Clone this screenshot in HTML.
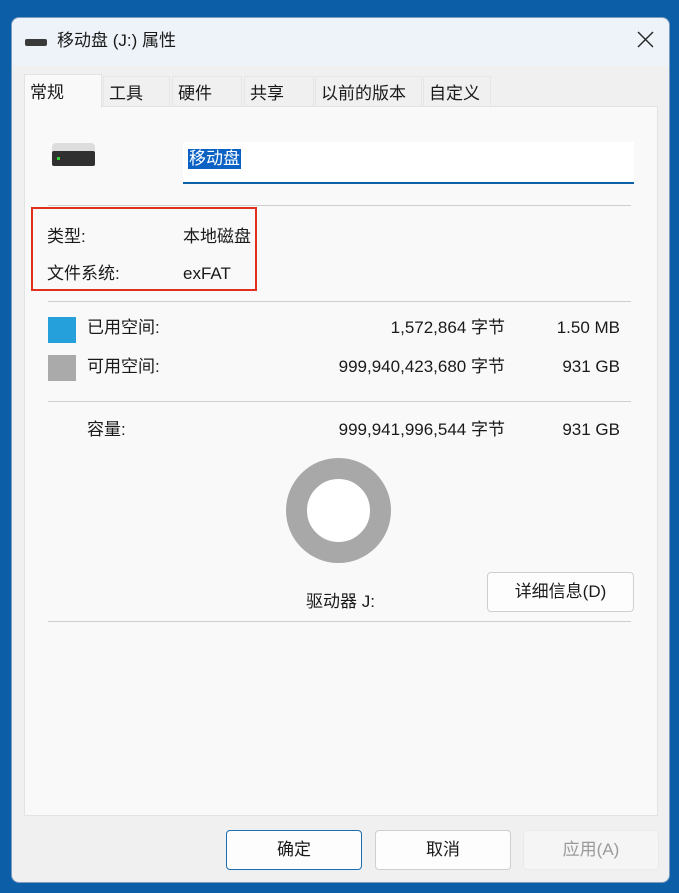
<!DOCTYPE html>
<html><head><meta charset="utf-8"><style>
*{margin:0;padding:0;box-sizing:border-box}
body{width:679px;height:893px;background:#0c5ea6;font-family:"Liberation Sans","Noto Sans CJK SC",sans-serif;color:#1a1a1a;position:relative;overflow:hidden}
.win{position:absolute;left:11px;top:17px;width:659px;height:866px;background:#f0f0f0;border-radius:8px;border:1px solid #7a9cc0}
.title{position:absolute;left:0;top:0;width:100%;height:48px;background:#eef3f9;border-radius:8px 8px 0 0}
.t{position:absolute;font-size:17px;white-space:nowrap;line-height:20px}
.r1{right:174px}.r2{right:59px}
.panel{position:absolute;left:12px;top:88px;width:634px;height:710px;background:#f9f9f9;border:1px solid #e3e3e3}
.tab{position:absolute;top:58px;height:30px;background:#f0f0f0;border:1px solid #e6e6e6;border-bottom:none;font-size:17px;line-height:20px;padding:7px 0 0 5px}
.hr{position:absolute;left:48px;width:583px;height:1px;background:#cfcfcf}
.btn{position:absolute;top:830px;height:40px;width:136px;border:1px solid #cfcfcf;border-radius:4px;background:#fdfdfd;font-size:17px;text-align:center;line-height:38px}
</style></head><body>
<div class="win">
<div class="title"></div>
<div style="position:absolute;left:13px;top:21px;width:22px;height:7px;background:#3a3a3a;border-radius:2px"></div>
<div class="t" style="left:45px;top:13px">移动盘 (J:) 属性</div>
<svg style="position:absolute;left:625px;top:13px" width="17" height="17"><path d="M1 1L16 16M16 1L1 16" stroke="#222" stroke-width="1.4"/></svg>
<div class="panel"></div>
<div class="tab" style="left:12px;top:56px;width:78px;height:34px;background:#f9f9f9;z-index:2;padding-top:8px;border-color:#e3e3e3">常规</div>
<div class="tab" style="left:91px;width:67px">工具</div>
<div class="tab" style="left:160px;width:70px">硬件</div>
<div class="tab" style="left:232px;width:70px">共享</div>
<div class="tab" style="left:303px;width:107px">以前的版本</div>
<div class="tab" style="left:411px;width:68px">自定义</div>
</div>
<div style="position:absolute;left:52px;top:143px;width:43px;height:9px;background:#ddd;border-radius:4px 4px 0 0"></div>
<div style="position:absolute;left:52px;top:151px;width:43px;height:15px;background:#303030;border-radius:2px"></div>
<div style="position:absolute;left:57px;top:157px;width:3px;height:3px;background:#3c3"></div>
<div style="position:absolute;left:183px;top:142px;width:451px;height:42px;background:#fff;border-bottom:2px solid #1060a8"></div>
<div class="t" style="left:188px;top:149px;background:#0b62c4;color:#fff;padding:0 1px">移动盘</div>
<div class="hr" style="top:205px"></div>
<div style="position:absolute;left:31px;top:207px;width:226px;height:84px;border:2px solid #e0301e"></div>
<div class="t" style="left:47px;top:227px">类型:</div>
<div class="t" style="left:183px;top:227px">本地磁盘</div>
<div class="t" style="left:47px;top:264px">文件系统:</div>
<div class="t" style="left:183px;top:264px">exFAT</div>
<div class="hr" style="top:301px"></div>
<div style="position:absolute;left:48px;top:317px;width:28px;height:26px;background:#26a0da"></div>
<div class="t" style="left:87px;top:318px">已用空间:</div>
<div class="t r1" style="top:318px">1,572,864 字节</div>
<div class="t r2" style="top:318px">1.50 MB</div>
<div style="position:absolute;left:48px;top:355px;width:28px;height:26px;background:#aaa"></div>
<div class="t" style="left:87px;top:357px">可用空间:</div>
<div class="t r1" style="top:357px">999,940,423,680 字节</div>
<div class="t r2" style="top:357px">931 GB</div>
<div class="hr" style="top:401px"></div>
<div class="t" style="left:87px;top:420px">容量:</div>
<div class="t r1" style="top:420px">999,941,996,544 字节</div>
<div class="t r2" style="top:420px">931 GB</div>
<div style="position:absolute;left:286px;top:458px;width:105px;height:105px;border-radius:50%;border:21px solid #a8a8a8;background:#fff"></div>
<div class="t" style="left:306px;top:592px">驱动器 J:</div>
<div style="position:absolute;left:487px;top:572px;width:147px;height:40px;border:1px solid #cfcfcf;border-radius:4px;background:#fdfdfd;font-size:17px;text-align:center;line-height:38px">详细信息(D)</div>
<div class="hr" style="top:621px"></div>
<div class="btn" style="left:226px;border-color:#1a6fb0">确定</div>
<div class="btn" style="left:375px">取消</div>
<div class="btn" style="left:523px;background:#f5f5f5;border-color:#eaeaea;color:#9a9a9a">应用(A)</div>
</body></html>
